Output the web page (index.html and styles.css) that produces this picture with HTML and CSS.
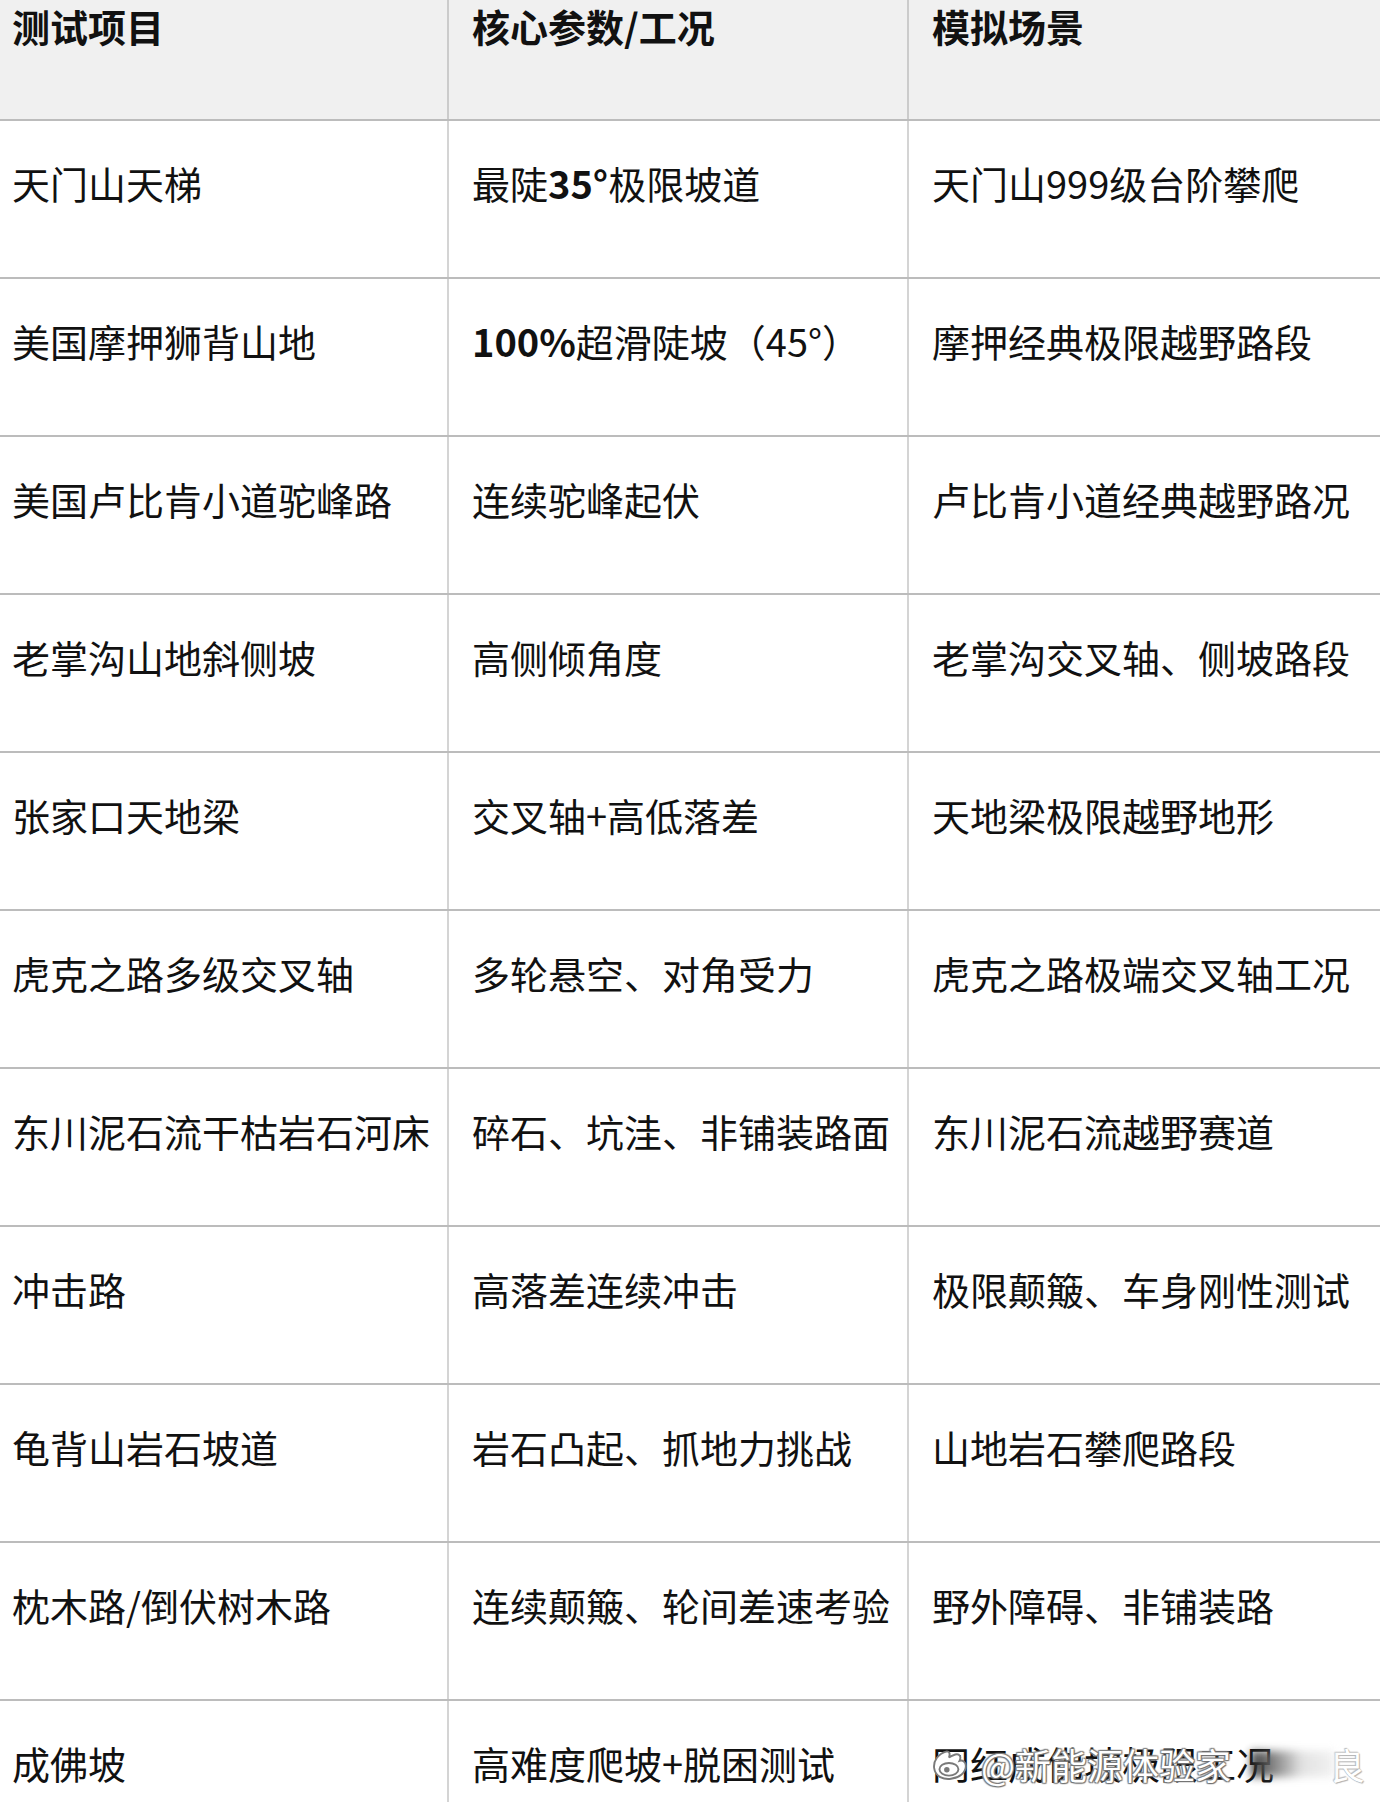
FILE: index.html
```html
<!DOCTYPE html>
<html lang="zh-CN">
<head>
<meta charset="utf-8">
<title>测试项目</title>
<link rel="stylesheet" href="styles.css">
</head>
<body>
<div class="page">
  <div class="table">
    <div class="row head">
      <div class="cell">测试项目</div>
      <div class="cell">核心参数/工况</div>
      <div class="cell">模拟场景</div>
    </div>
    <div class="row">
      <div class="cell">天门山天梯</div>
      <div class="cell">最陡<span class="strong">35°</span>极限坡道</div>
      <div class="cell">天门山999级台阶攀爬</div>
    </div>
    <div class="row">
      <div class="cell">美国摩押狮背山地</div>
      <div class="cell"><span class="strong">100%</span>超滑陡坡（45°）</div>
      <div class="cell">摩押经典极限越野路段</div>
    </div>
    <div class="row">
      <div class="cell">美国卢比肯小道驼峰路</div>
      <div class="cell">连续驼峰起伏</div>
      <div class="cell">卢比肯小道经典越野路况</div>
    </div>
    <div class="row">
      <div class="cell">老掌沟山地斜侧坡</div>
      <div class="cell">高侧倾角度</div>
      <div class="cell">老掌沟交叉轴、侧坡路段</div>
    </div>
    <div class="row">
      <div class="cell">张家口天地梁</div>
      <div class="cell">交叉轴+高低落差</div>
      <div class="cell">天地梁极限越野地形</div>
    </div>
    <div class="row">
      <div class="cell">虎克之路多级交叉轴</div>
      <div class="cell">多轮悬空、对角受力</div>
      <div class="cell">虎克之路极端交叉轴工况</div>
    </div>
    <div class="row">
      <div class="cell">东川泥石流干枯岩石河床</div>
      <div class="cell">碎石、坑洼、非铺装路面</div>
      <div class="cell">东川泥石流越野赛道</div>
    </div>
    <div class="row">
      <div class="cell">冲击路</div>
      <div class="cell">高落差连续冲击</div>
      <div class="cell">极限颠簸、车身刚性测试</div>
    </div>
    <div class="row">
      <div class="cell">龟背山岩石坡道</div>
      <div class="cell">岩石凸起、抓地力挑战</div>
      <div class="cell">山地岩石攀爬路段</div>
    </div>
    <div class="row">
      <div class="cell">枕木路/倒伏树木路</div>
      <div class="cell">连续颠簸、轮间差速考验</div>
      <div class="cell">野外障碍、非铺装路</div>
    </div>
    <div class="row">
      <div class="cell">成佛坡</div>
      <div class="cell">高难度爬坡+脱困测试</div>
      <div class="cell wm-host">网红成佛坡极限工况
        <div class="watermark">
          <svg class="wm-logo" viewBox="0 0 36 36" width="38" height="38" aria-hidden="true">
            <path d="M15 6 C7 8 2 15 3 22 C4 30 12 33 19 32 C27 31 33 26 33 20 C33 16 30 14 27 15 C29 11 27 8 23 9 C20 10 18 11 17 12 C18 9 18 6 15 6 Z" fill="#fff" stroke="#7a7a7a" stroke-width="1.8"/>
            <ellipse cx="17" cy="23" rx="9" ry="6" fill="#fff" stroke="#7a7a7a" stroke-width="1.8"/>
            <circle cx="15" cy="23.5" r="2.6" fill="#7a7a7a"/>
          </svg>
          <span class="wm-text">@新能源体验家</span>
          <span class="wm-blur"></span>
          <span class="wm-tail">良</span>
        </div>
      </div>
    </div>
  </div>
</div>
</body>
</html>
```

FILE: styles.css
```css
html, body {
  margin: 0;
  padding: 0;
  background: #ffffff;
}

body {
  width: 1380px;
  height: 1802px;
  overflow: hidden;
  font-family: "Noto Sans CJK SC", "Noto Sans", sans-serif;
  color: #111111;
}

.page {
  width: 1380px;
  height: 1802px;
  overflow: hidden;
}

.table {
  margin-left: -11px;
  display: flex;
  flex-direction: column;
  width: 1400px;
}

.row {
  display: grid;
  grid-template-columns: 460px 460px 480px;
  height: 158px;
  border-bottom: 2px solid #bcbcbc;
  box-sizing: border-box;
}

.cell {
  box-sizing: border-box;
  padding: 34px 0 0 23px;
  font-size: 38px;
  line-height: 56px;
  white-space: nowrap;
  border-right: 2px solid #d4d4d4;
}

.head {
  height: 121px;
  background: #f0f0f0;
}

.head .cell {
  font-weight: 700;
  padding-top: 4px;
  line-height: 44px;
  border-right-color: #cbcbcb;
}

.strong {
  font-weight: 600;
}

.wm-host {
  position: relative;
}

.watermark {
  position: absolute;
  left: 22px;
  top: 40px;
  display: flex;
  align-items: center;
  height: 46px;
}

.wm-logo {
  display: block;
  margin-right: 8px;
}

.wm-text {
  font-size: 36px;
  line-height: 46px;
  color: #ffffff;
  text-shadow: 0 0 2px #5e5e5e, 1px 1px 1px #7a7a7a, -1px -1px 1px #8a8a8a, 1px -1px 1px #8a8a8a, -1px 1px 1px #8a8a8a;
  margin-left: 4px;
}

.wm-blur {
  display: block;
  width: 84px;
  height: 26px;
  margin-left: 20px;
  background: linear-gradient(90deg, #1e1e1e 0%, #8a8a8a 35%, #dedede 60%, #f0f0f0 100%);
  filter: blur(4px);
  opacity: 0.85;
}

.wm-tail {
  font-size: 36px;
  line-height: 46px;
  color: #ffffff;
  text-shadow: 0 0 1px #a0a0a0, 1px 1px 1px #b4b4b4, -1px -1px 1px #c0c0c0;
  margin-left: -6px;
}
```
